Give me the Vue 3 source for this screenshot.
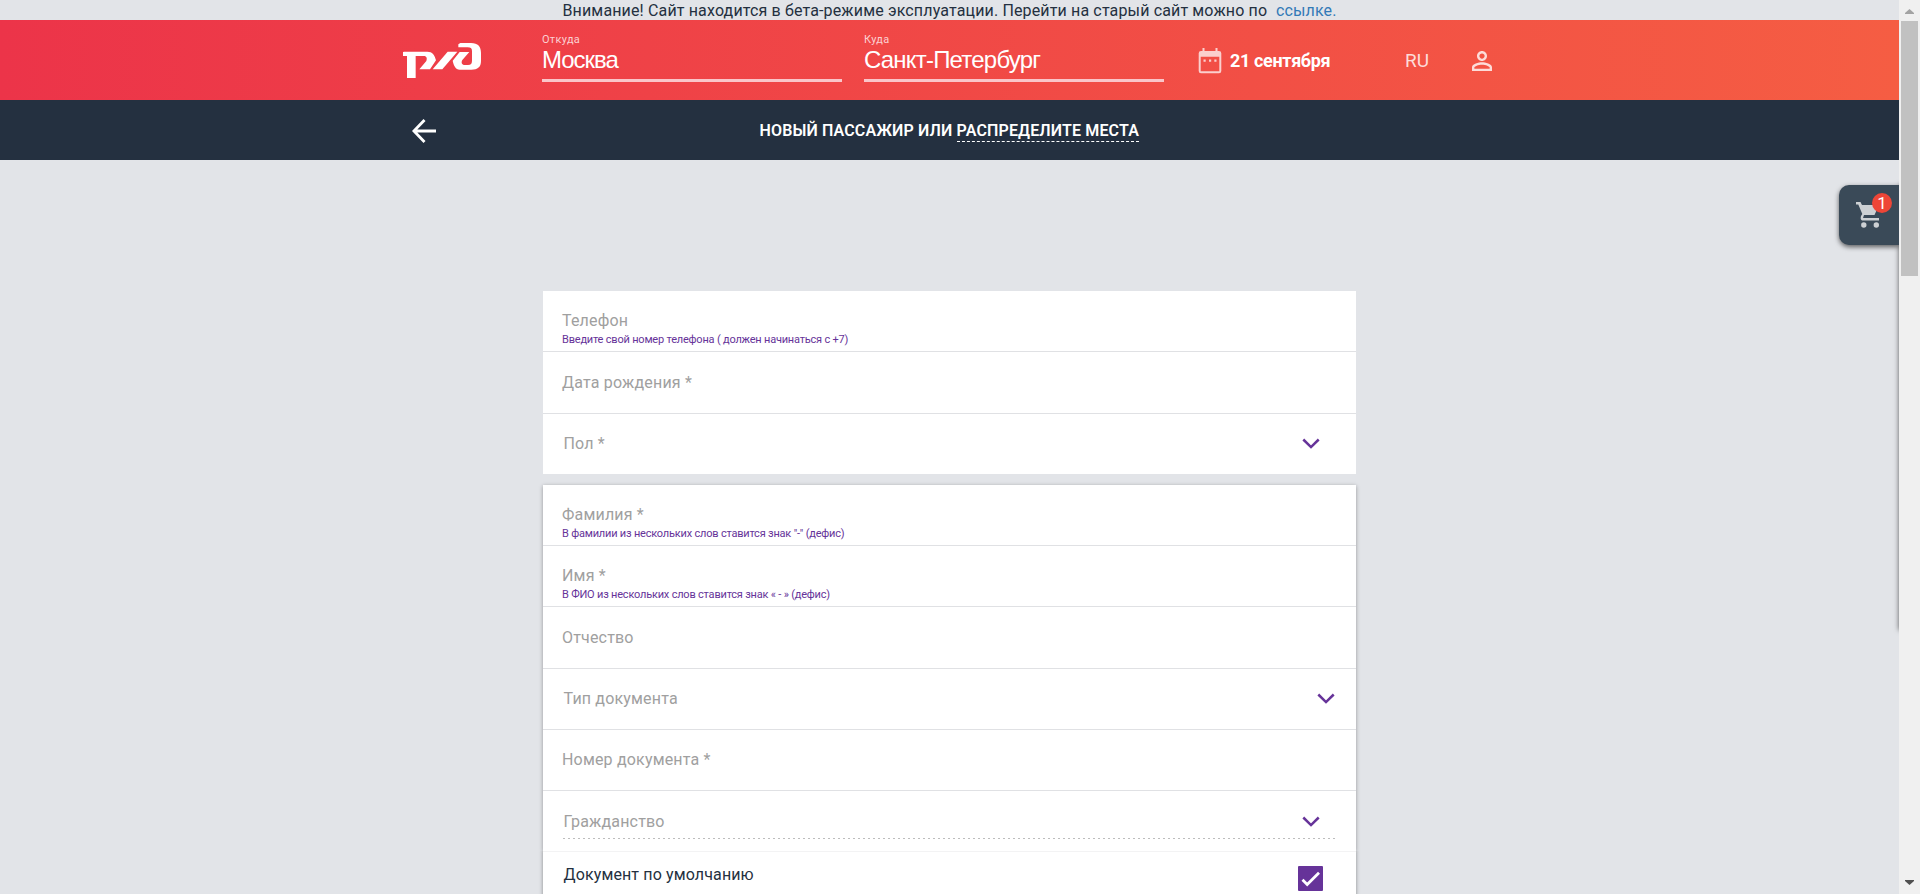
<script setup>
const personal = [
  { label: 'Телефон', hint: 'Введите свой номер телефона ( должен начинаться с +7)', size: 'h61' },
  { label: 'Дата рождения *', size: 'h62' },
  { label: 'Пол *', select: 'inner', size: 'h60' },
]
const passport = [
  { label: 'Фамилия *', hint: 'В фамилии из нескольких слов ставится знак "-" (дефис)', size: 'h61' },
  { label: 'Имя *', hint: 'В ФИО из нескольких слов ставится знак « - » (дефис)', size: 'h61' },
  { label: 'Отчество', size: 'h62' },
  { label: 'Тип документа', select: 'outer', size: 'h61' },
  { label: 'Номер документа *', size: 'h61' },
  { label: 'Гражданство', select: 'inner', dotted: true, size: 'h60' },
]
const groups = [personal, passport]
</script>

<template>
  <div class="window">
    <main class="page">
      <div class="notice">Внимание! Сайт находится в бета-режиме эксплуатации. Перейти на старый сайт можно по <a>ссылке.</a></div>

      <header class="header">
        <svg class="logo" viewBox="0 0 285 150" aria-label="РЖД">
          <path d="M24 51L28 50H97C112 50 119 59 123 76L105 103H73L94 78C97 70 95 63 87 63H62V129H36V63H24Z" />
          <path d="M158 50H187L142 103H113Z" />
          <path d="M190 28L196 24H228C249 24 258 35 258 54V78C258 96 248 104 229 104H194C182 104 176 91 173 77L194 51H223L202 75C197 84 202 90 210 90H219C228 90 231 85 231 77V48C231 40 227 37 218 37H190Z" />
        </svg>
        <label class="city from"><small>Откуда</small><span>Москва</span></label>
        <label class="city to"><small>Куда</small><span>Санкт-Петербург</span></label>
        <svg class="calendar" viewBox="0 0 24 26">
          <path fill-rule="evenodd" d="M4.500 0H6.500V3H17.500V0H19.500V3H21Q23.300 3 23.300 5.300V23Q23.300 25.300 21 25.300H3Q.7 25.300 .7 23V5.300Q.7 3 3 3H4.500ZM2.700 8.700V23.200H21.300V8.700Z" />
          <path d="M5.500 11.600h2.200v2.200H5.500zM11 11.600h2.200v2.200H11zM16.300 11.600h2.200v2.200h-2.200z" />
        </svg>
        <strong class="date">21 сентября</strong>
        <span class="lang">RU</span>
        <svg class="user" viewBox="4 4 16 16">
          <path d="M12 5.900c1.160 0 2.100.94 2.100 2.100s-.94 2.100-2.100 2.100S9.900 9.160 9.900 8s.94-2.100 2.100-2.100m0 9c2.970 0 6.100 1.460 6.100 2.100v1.100H5.900V17c0-.64 3.130-2.100 6.100-2.100M12 4C9.790 4 8 5.790 8 8s1.790 4 4 4 4-1.790 4-4-1.790-4-4-4zm0 9c-2.670 0-8 1.340-8 4v3h16v-3c0-2.660-5.330-4-8-4z" />
        </svg>
      </header>

      <nav class="subnav">
        <svg class="back" viewBox="0 0 23 23"><path d="M12 1L1.800 11.500L12 22M2 11.500H23" /></svg>
        <h1 class="title">НОВЫЙ ПАССАЖИР ИЛИ <a>РАСПРЕДЕЛИТЕ МЕСТА</a></h1>
      </nav>

      <form class="form">
        <section v-for="(group, g) in groups" :key="g" class="card" :class="{ raised: g === 1 }">
          <div v-for="row in group" :key="row.label" class="row" :class="[row.size, { hinted: row.hint, select: row.select, dotted: row.dotted }]">
            <div class="field">
              <span class="label">{{ row.label }}</span>
              <small v-if="row.hint" class="hint">{{ row.hint }}</small>
            </div>
            <svg v-if="row.select" class="chevron" :class="row.select" viewBox="0 0 18 11"><path d="M1.300 1.500L9 9.100L16.700 1.500" /></svg>
          </div>
        </section>
        <section class="default">
          <span>Документ по умолчанию</span>
          <svg class="check" viewBox="0 0 25 25"><rect width="25" height="25" rx="1" /><path d="M4.500 13.800L9.200 18.500L21 6.800" /></svg>
        </section>
      </form>

      <aside class="drawer"></aside>
      <button class="cart" aria-label="Корзина">
        <svg viewBox="0 0 24 26"><path d="M0 0H4.500L6 3H23L18.500 13H8L7 16H23V18.500H6Q4 17.500 5 14L6.300 12L2.300 2.500H0Z" /><circle cx="7.800" cy="23" r="2.700" /><circle cx="20.300" cy="23" r="2.700" /></svg>
        <b>1</b>
      </button>
    </main>
    <div class="scrollbar">
      <svg viewBox="0 0 9 5"><path fill="#a3a3a3" d="M0 5H9V4L4.500 0L0 4Z" /></svg>
      <div class="thumb"></div>
      <svg class="down" viewBox="0 0 9 5"><path fill="#505050" d="M0 0H9V1L4.500 5L0 1Z" /></svg>
    </div>
  </div>
</template>

<style>
body { overflow: hidden; }
</style>
<style scoped>
* { box-sizing: border-box; }
.window { display: flex; width: 1920px; height: 894px; overflow: hidden; font-family: Roboto, sans-serif; font-size: 16px; color: #243040; }
.page { position: relative; width: 1899px; height: 894px; overflow: hidden; background: #e2e4e8; }
.notice { height: 20px; padding-left: 562.500px; line-height: 21px; white-space: nowrap; letter-spacing: .145px; }
.notice a { margin-left: 4.500px; color: #337ab7; }
.header { display: flex; align-items: flex-start; height: 80px; background: linear-gradient(90deg, #ec3449, #f55d43); color: #fff; }
.logo { width: 95px; height: 50px; margin: 15px 0 0 395px; fill: #fff; flex: none; }
.city { display: flex; flex-direction: column; width: 300px; height: 61.500px; margin-left: 52px; border-bottom: 3px solid #fac5c9; flex: none; }
.city.to { margin-left: 22px; }
.city small { height: 24px; padding-top: 13px; font-size: 11px; line-height: 13px; letter-spacing: .3px; color: #fbd0d2; }
.city span { font: 24px/31px "Liberation Sans", sans-serif; letter-spacing: -.8px; white-space: nowrap; }
.city.from span { letter-spacing: -1px; }
.calendar { width: 24px; height: 26px; margin: 28px 0 0 34px; fill: #fbcfcd; flex: none; }
.date { width: 175px; margin: 31px 0 0 8px; font-size: 18px; line-height: 20px; letter-spacing: -.35px; white-space: nowrap; flex: none; }
.lang { width: 67px; margin-top: 29.500px; font-size: 19px; line-height: 21px; color: #fddcd9; flex: none; }
.user { width: 20px; height: 20px; margin-top: 31px; fill: #fddcd9; flex: none; }
.subnav { display: flex; align-items: center; height: 60px; background: #243040; color: #fff; }
.back { width: 24px; height: 24px; margin: 1px 0 0 411.500px; fill: none; stroke: #fff; stroke-width: 2.700; flex: none; }
.title { margin: 1px 0 0 324px; font-size: 16px; font-weight: 600; line-height: 22px; letter-spacing: .15px; white-space: nowrap; }
.title a { display: inline-block; height: 22px; border-bottom: 1px dashed #fff; }
.form { width: 813px; margin: 131px 0 0 543px; }
.card { margin-bottom: 11px; background: #fff; }
.card.raised { margin-bottom: 0; box-shadow: 0 1px 4px rgba(0, 0, 0, .35); }
.row { position: relative; display: flex; align-items: center; justify-content: space-between; padding-left: 19px; border-bottom: 1px solid #e0e1e4; }
.row:last-child { border-bottom: 0; }
.h60 { height: 60px; }
.h61 { height: 61px; }
.h62 { height: 62px; }
.field { display: flex; flex-direction: column; }
.label { line-height: 20px; letter-spacing: .18px; color: #a0a0a0; white-space: nowrap; }
.hinted .field { padding-top: 15px; }
.hint { margin: 1px 0 -1px; font-size: 11px; line-height: 16px; letter-spacing: -.2px; color: #663399; white-space: nowrap; }
.select { padding-left: 20.500px; }
.chevron { width: 18px; height: 11px; margin-bottom: 1px; fill: none; stroke: #663399; stroke-width: 2.500; }
.inner { margin-right: 36px; }
.outer { margin-right: 21px; }
.dotted .label { position: relative; top: 1px; }
.dotted .chevron { margin-bottom: 0; }
.dotted::after { content: ""; position: absolute; left: 20px; right: 21px; bottom: 12px; height: 1px; background: repeating-linear-gradient(90deg, #bdbdbd 0 2px, transparent 2px 5px); }
.default { display: flex; align-items: flex-start; justify-content: space-between; height: 80px; padding: 15px 33px 0 20.500px; background: #fff; box-shadow: 0 1px 4px rgba(0, 0, 0, .4); clip-path: inset(0 -5px 0); border-top: 1px solid #f3f3f4; }
.default span { margin-top: -2px; line-height: 20px; letter-spacing: .13px; }
.check { width: 25px; height: 25px; margin-top: -1px; fill: #663399; }
.check path { fill: none; stroke: #fff; stroke-width: 2.800; }
.drawer { position: absolute; top: 185px; left: 1899px; width: 60px; height: 445px; box-shadow: 0 0 5px rgba(0, 0, 0, .6); }
.cart { position: absolute; top: 185px; right: 0; width: 60px; height: 60px; padding: 0; border: 0; border-radius: 10px 0 0 10px; background: #3a4a58; box-shadow: 0 2px 5px rgba(0, 0, 0, .6); }
.cart svg { position: absolute; left: 17px; top: 17px; width: 24px; height: 26px; fill: #cdd1d4; }
.cart b { position: absolute; left: 33px; top: 8px; width: 20px; height: 20px; border-radius: 50%; background: #ee4637; font: 17px/20px Roboto, sans-serif; color: #fff; }
.scrollbar { display: flex; flex-direction: column; width: 21px; background: #f0f0f0; padding-top: 9px; }
.scrollbar svg { display: block; width: 9px; height: 5px; margin-left: 6px; }
.thumb { width: 17px; height: 255px; margin: 7px 0 0 2px; background: #c1c1c1; }
.scrollbar .down { margin-top: auto; margin-bottom: 9px; }
</style>
